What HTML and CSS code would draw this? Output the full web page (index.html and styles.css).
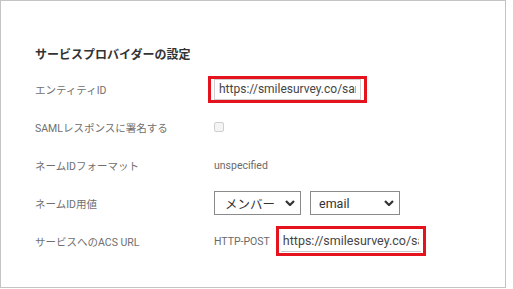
FILE: index.html
```html
<!DOCTYPE html>
<html lang="ja">
<head>
<meta charset="utf-8">
<link rel="stylesheet" href="styles.css">
</head>
<body>
<div class="panel">
  <h2 class="title">サービスプロバイダーの設定</h2>
  <div class="form">
    <div class="label">エンティティID</div>
    <div class="value">
      <span class="mark mark-first"><input class="text-input" type="text" value="https://smilesurvey.co/saml/metadata" readonly></span>
    </div>

    <div class="label">SAMLレスポンスに署名する</div>
    <div class="value"><input class="check" type="checkbox" disabled></div>

    <div class="label">ネームIDフォーマット</div>
    <div class="value plain">unspecified</div>

    <div class="label">ネームID用値</div>
    <div class="value selects">
      <div class="select sel-member"><span>メンバー</span><svg class="chev" viewBox="0 0 10 6" width="10" height="6"><path d="M1 1 L5 5 L9 1" fill="none" stroke="#333" stroke-width="2.2"/></svg></div>
      <div class="select sel-email"><span>email</span><svg class="chev" viewBox="0 0 10 6" width="10" height="6"><path d="M1 1 L5 5 L9 1" fill="none" stroke="#333" stroke-width="2.2"/></svg></div>
    </div>

    <div class="label">サービスへのACS URL</div>
    <div class="value acs">
      <span class="method">HTTP-POST</span>
      <span class="mark mark-second"><input class="line-input" type="text" value="https://smilesurvey.co/saml/acs" readonly></span>
    </div>
  </div>
</div>
</body>
</html>
```
FILE: styles.css
```css
html, body {
  margin: 0;
  padding: 0;
  background: #ffffff;
}
body {
  font-family: Roboto, "Noto Sans CJK JP", sans-serif;
}
.panel {
  box-sizing: border-box;
  width: 506px;
  height: 288px;
  border: 1px solid #c4c4c4;
  padding: 44px 0 0 34px;
}
.title {
  margin: 0;
  height: 20px;
  line-height: 20px;
  font-size: 12px;
  font-weight: 700;
  color: #333333;
}
.form {
  margin-top: 5px;
  display: grid;
  grid-template-columns: 179px 1fr;
  grid-auto-rows: 38px;
  align-items: center;
}
.label {
  font-size: 10.5px;
  color: #6f6f6f;
}
.value {
  display: flex;
  align-items: center;
}
.plain {
  font-size: 10.5px;
  color: #6a6a6a;
}
.mark {
  display: inline-flex;
  border: 3px solid #e5131d;
}
.mark-first {
  margin-left: -6px;
  padding: 0 3px;
}
.text-input {
  box-sizing: border-box;
  width: 147px;
  height: 21px;
  border: 1px solid #d0d0d0;
  padding: 0 4px;
  font-family: Roboto, "Noto Sans CJK JP", sans-serif;
  font-size: 12px;
  color: #454545;
  background: #fff;
  outline: none;
}
.check {
  appearance: none;
  -webkit-appearance: none;
  box-sizing: border-box;
  width: 10px;
  height: 10px;
  margin: 0;
  border: 1px solid #cfcfcf;
  border-radius: 2px;
  background: #f4f4f4;
}
.selects {
  gap: 9px;
}
.select {
  box-sizing: border-box;
  height: 24px;
  border: 1px solid #8a8a8a;
  display: flex;
  align-items: center;
  justify-content: space-between;
  padding: 0 5px 0 10px;
  font-size: 12.5px;
  color: #333333;
}
.sel-member { width: 87px; }
.sel-email { width: 90px; padding-left: 8px; }
.chev { display: block; }
.acs {
  gap: 6px;
}
.method {
  font-size: 10.5px;
  color: #6a6a6a;
}
.mark-second {
  padding: 0 2px 0 2px;
  height: 24px;
}
.line-input {
  box-sizing: border-box;
  width: 140px;
  height: 23px;
  border: none;
  border-bottom: 1px solid #c8c8c8;
  padding: 0 2px;
  font-family: Roboto, "Noto Sans CJK JP", sans-serif;
  font-size: 12.5px;
  color: #454545;
  background: #fff;
  outline: none;
}
```
